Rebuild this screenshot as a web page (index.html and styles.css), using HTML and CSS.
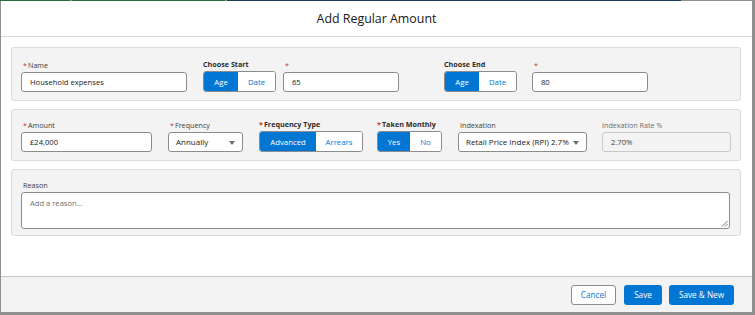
FILE: index.html
```html
<!DOCTYPE html>
<html>
<head>
<meta charset="utf-8">
<link rel="stylesheet" href="styles.css">
</head>
<body>
<div class="topbar"><span class="seg g1"></span><span class="seg g2"></span><span class="seg n1"></span><span class="seg gr"></span></div>
<div class="modal">
  <div class="header">Add Regular Amount</div>
  <div class="body">
    <div class="section row1">
      <div class="field w-name">
        <label><span class="req">*</span>Name</label>
        <div class="input">Household expenses</div>
      </div>
      <div class="field tight">
        <label class="bold">Choose Start</label>
        <div class="group"><span class="on w-age">Age</span><span class="off w-date">Date</span></div>
      </div>
      <div class="field w-age-in wide">
        <label><span class="req">*</span></label>
        <div class="input">65</div>
      </div>
      <div class="field mid">
        <label class="bold">Choose End</label>
        <div class="group"><span class="on w-age">Age</span><span class="off w-date">Date</span></div>
      </div>
      <div class="field w-age-in">
        <label><span class="req">*</span></label>
        <div class="input">80</div>
      </div>
    </div>
    <div class="section row2">
      <div class="field w-amount">
        <label><span class="req">*</span>Amount</label>
        <div class="input">£24,000</div>
      </div>
      <div class="field w-freq">
        <label><span class="req">*</span>Frequency</label>
        <div class="input select">Annually<span class="caret"></span></div>
      </div>
      <div class="field snug">
        <label class="bold"><span class="req">*</span>Frequency Type</label>
        <div class="group"><span class="on w-adv">Advanced</span><span class="off w-arr">Arrears</span></div>
      </div>
      <div class="field">
        <label class="bold"><span class="req">*</span>Taken Monthly</label>
        <div class="group"><span class="on w-yes">Yes</span><span class="off w-no">No</span></div>
      </div>
      <div class="field w-index mid">
        <label>Indexation</label>
        <div class="input select">Retail Price Index (RPI) 2.7%<span class="caret"></span></div>
      </div>
      <div class="field w-rate">
        <label class="muted">Indexation Rate %</label>
        <div class="input disabled">2.70%</div>
      </div>
    </div>
    <div class="section row3">
      <div class="field grow">
        <label>Reason</label>
        <div class="textarea">Add a reason...<svg class="grip" width="7" height="7" viewBox="0 0 7 7"><path d="M6.5 1 L1 6.5 M6.5 4 L4 6.5" stroke="#777" stroke-width="1"/></svg></div>
      </div>
    </div>
  </div>
  <div class="footer">
    <span class="btn neutral">Cancel</span>
    <span class="btn brand w-save">Save</span>
    <span class="btn brand w-savenew">Save &amp; New</span>
  </div>
</div>
</body>
</html>
```
FILE: styles.css
```css
* { box-sizing: border-box; }
html, body { margin: 0; padding: 0; }
body {
  background: #8f8f8f;
  font-family: "Open Sans", "Noto Sans", sans-serif;
  color: #181818;
  width: 755px;
  height: 315px;
  overflow: hidden;
}
.topbar { display: flex; height: 1px; }
.seg { display: block; height: 1px; }
.g1 { width: 70px; background: #2b6a3a; margin-right: 2px; }
.g2 { width: 153px; background: #2b6a3a; margin-right: 2px; }
.n1 { width: 454px; background: #1b3a5c; }
.gr { flex: 1; background: #8f8f8f; }
.modal {
  margin-left: 1px;
  width: 751px;
  height: 311px;
  background: #fff;
  display: flex;
  flex-direction: column;
}
.header {
  height: 36px;
  border-bottom: 1px solid #d8d8d8;
  text-align: center;
  font-size: 12.4px;
  line-height: 35px;
  color: #181818;
}
.body {
  flex: 1;
  padding: 10px 11px 0 10px;
  display: flex;
  flex-direction: column;
}
.section {
  background: #f3f3f3;
  border: 1px solid #dcdcdc;
  border-radius: 3px;
  display: flex;
  align-items: flex-end;
  padding: 0 0 0 9px;
}
.row1 { height: 54px; padding-bottom: 8px; }
.row2 { height: 52px; padding-bottom: 8px; margin-top: 8px; }
.row3 { height: 67px; padding-bottom: 6px; padding-right: 10px; margin-top: 8px; }
.section .field { margin-right: 16px; flex-shrink: 0; }
.section .field.tight { margin-right: 7px; }
.section .field.wide { margin-right: 45px; }
.section .field.mid { margin-right: 15px; }
.section .field.snug { margin-right: 14px; }
.section .field:last-child { margin-right: 0; }
.section .field.grow { flex: 1; flex-shrink: 1; }
.field { display: flex; flex-direction: column; }
label {
  font-size: 7.2px;
  color: #3e3e3c;
  height: 12px;
  line-height: 10px;
  padding-left: 2px;
  white-space: nowrap;
}
label.bold { font-weight: 700; color: #2b2b2b; padding-left: 0; }
label.muted { color: #706e6b; padding-left: 0; }
.req { color: #c23934; margin-right: 1px; }
.input {
  height: 20px;
  border: 1px solid #8c8c8c;
  border-radius: 3px;
  background: #fff;
  font-size: 7.6px;
  line-height: 18px;
  padding-left: 8px;
  color: #181818;
  position: relative;
  white-space: nowrap;
}
.input.select { padding-left: 7px; font-size: 8px; }
.caret {
  position: absolute;
  right: 7px;
  top: 8px;
  width: 0; height: 0;
  border-left: 3.5px solid transparent;
  border-right: 3.5px solid transparent;
  border-top: 4px solid #706e6b;
}
.input.disabled { background: #f3f3f3; border-color: #c9c9c9; color: #3e3e3c; }
.w-name { width: 166px; }
.w-age-in { width: 116px; }
.w-amount { width: 131px; }
.w-freq { width: 75px; }
.w-index { width: 129px; }
.w-rate { width: 129px; }
.group {
  display: flex;
  height: 21px;
  border: 1px solid #8c8c8c;
  border-radius: 3px;
  overflow: hidden;
  font-size: 7.8px;
}
.group span { display: flex; align-items: center; justify-content: center; flex-shrink: 0; }
.group .on { background: #0176d3; color: #fff; }
.group .off { background: #fff; color: #0176d3; }
.w-age { width: 34px; }
.w-date { width: 37px; }
.w-adv { width: 56px; }
.w-arr { width: 46px; }
.w-yes { width: 32px; }
.w-no { width: 31px; }
.textarea {
  height: 37px;
  border: 1px solid #8c8c8c;
  border-radius: 3px;
  background: #fff;
  font-size: 7.6px;
  color: #706e6b;
  padding: 5px 8px;
  position: relative;
}
.grip { position: absolute; right: 1px; bottom: 1px; }
.footer {
  height: 36px;
  margin-top: auto;
  border-top: 1px solid #c9c9c9;
  background: #f3f3f3;
  display: flex;
  align-items: center;
  justify-content: flex-end;
  padding-right: 18px;
}
.btn {
  height: 20px;
  border-radius: 3px;
  font-size: 8.2px;
  display: flex;
  align-items: center;
  justify-content: center;
}
.neutral { width: 45px; background: #fff; border: 1px solid #8c8c8c; color: #0176d3; margin-right: 8px; }
.brand { background: #0176d3; color: #fff; }
.w-save { width: 38px; margin-right: 7px; }
.w-savenew { width: 65px; }
```
